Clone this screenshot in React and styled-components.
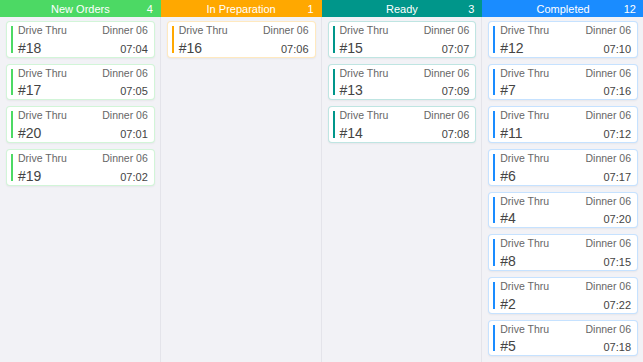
import React from 'react';
import styled, { createGlobalStyle } from 'styled-components';

const GlobalStyle = createGlobalStyle`
  html, body {
    margin: 0;
    padding: 0;
    background: #f2f2f6;
    font-family: "Liberation Sans", Arial, sans-serif;
  }
`;

const COLUMNS = [
  {
    title: 'New Orders', color: '#4cd964', tint: 'rgba(76, 217, 100, 0.25)',
    orders: [['18', '07:04'], ['17', '07:05'], ['20', '07:01'], ['19', '07:02']],
  },
  {
    title: 'In Preparation', color: '#ffa800', tint: 'rgba(255, 168, 0, 0.25)',
    orders: [['16', '07:06']],
  },
  {
    title: 'Ready', color: '#00968a', tint: 'rgba(0, 150, 138, 0.25)',
    orders: [['15', '07:07'], ['13', '07:09'], ['14', '07:08']],
  },
  {
    title: 'Completed', color: '#1a8cff', tint: 'rgba(26, 140, 255, 0.25)', count: 12,
    orders: [['12', '07:10'], ['7', '07:16'], ['11', '07:12'], ['6', '07:17'], ['4', '07:20'], ['8', '07:15'], ['2', '07:22'], ['5', '07:18']],
  },
];

const Board = styled.div`
  display: grid;
  grid-template-columns: repeat(4, 1fr);
  width: 643px;
  height: 362px;
  overflow: hidden;
`;

const Column = styled.div`
  display: flex;
  flex-direction: column;
  border-right: 1px solid #e4e4ea;
  &:last-child { border-right: none; }
`;

const Header = styled.div`
  display: flex;
  align-items: center;
  justify-content: center;
  position: relative;
  height: 17px;
  background: ${p => p.$color};
  color: #fff;
  font-size: 11px;
  margin-right: -1px;
`;

const Count = styled.span`
  position: absolute;
  right: 8px;
`;

const List = styled.div`
  display: flex;
  flex-direction: column;
  gap: 6.2px;
  padding: 4px 5px 0 6px;
`;

const Card = styled.div`
  position: relative;
  height: 36.5px;
  box-sizing: border-box;
  background: #fff;
  border: 1px solid ${p => p.$tint};
  border-radius: 4px;
  box-shadow: 0 1px 2px rgba(0, 0, 0, 0.05);
  padding: 1px 6px 0 11px;
  display: flex;
  flex-direction: column;
  justify-content: space-between;
  &::before {
    content: '';
    position: absolute;
    left: 4px;
    top: 4px;
    bottom: 4px;
    width: 2px;
    background: ${p => p.$color};
  }
`;

const Row = styled.div`
  display: flex;
  justify-content: space-between;
  align-items: baseline;
`;

const Meta = styled.span`
  font-size: 10.5px;
  color: #666;
  line-height: 14px;
`;

const Number = styled.span`
  font-size: 14px;
  color: #444;
  line-height: 17px;
`;

const Time = styled.span`
  font-size: 11px;
  color: #444;
`;

function App() {
  return (
    <>
      <GlobalStyle />
      <Board>
        {COLUMNS.map(col => (
          <Column key={col.title}>
            <Header $color={col.color}>
              {col.title}
              <Count>{col.count || col.orders.length}</Count>
            </Header>
            <List>
              {col.orders.map(([num, time]) => (
                <Card key={num} $color={col.color} $tint={col.tint}>
                  <Row>
                    <Meta>Drive Thru</Meta>
                    <Meta>Dinner 06</Meta>
                  </Row>
                  <Row>
                    <Number>#{num}</Number>
                    <Time>{time}</Time>
                  </Row>
                </Card>
              ))}
            </List>
          </Column>
        ))}
      </Board>
    </>
  );
}

export default App;
